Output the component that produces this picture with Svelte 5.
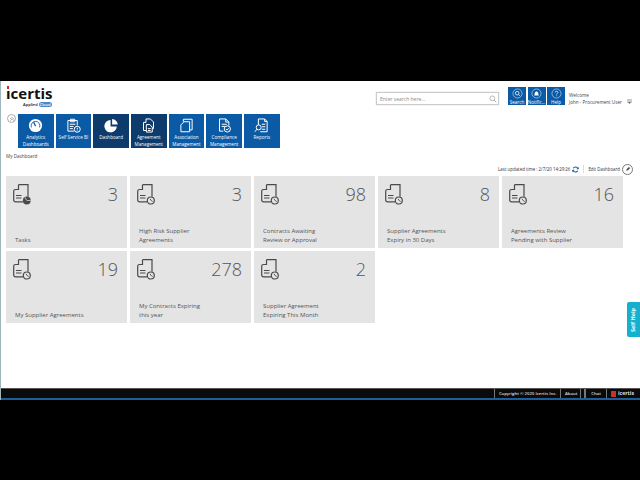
<script>
  const navItems = [
    { icon: "gauge", label: ["Analytics", "Dashboards"] },
    { icon: "clipboard", label: ["Self Service BI"] },
    { icon: "pie", label: ["Dashboard"], active: true },
    { icon: "docs", label: ["Agreement", "Management"], active: true },
    { icon: "copy", label: ["Association", "Management"] },
    { icon: "check", label: ["Compliance", "Management"] },
    { icon: "report", label: ["Reports"] }
  ];

  const tiles = [
    { count: 3, label: ["Tasks"], badge: "pie" },
    { count: 3, label: ["High Risk Supplier", "Agreements"] },
    { count: 98, label: ["Contracts Awaiting", "Review or Approval"] },
    { count: 8, label: ["Supplier Agreements", "Expiry in 30 Days"] },
    { count: 16, label: ["Agreements Review", "Pending with Supplier"] },
    { count: 19, label: ["My Supplier Agreements"] },
    { count: 278, label: ["My Contracts Expiring", "this year"] },
    { count: 2, label: ["Supplier Agreement", "Expiring This Month"] }
  ];

  const quick = [
    { label: "Search", icon: "search" },
    { label: "Notific...", icon: "bell" },
    { label: "Help", icon: "help" }
  ];
</script>

<div class="screen">
  <div class="letterbox"></div>
  <div class="app">
    <div class="main">
      <header>
        <div class="logo">
          <div class="wordmark"><span class="first">ı<i class="dot"></i></span>certis</div>
          <div class="applied">Applied <span class="pill">Cloud</span></div>
        </div>
        <div class="search">
          <span>Enter search here...</span>
          <svg viewBox="0 0 12 12" width="8" height="8"><circle cx="5" cy="5" r="3.6" fill="none" stroke="#999" stroke-width="1" /><path d="M7.6 7.6 11 11" stroke="#999" stroke-width="1.2" /></svg>
        </div>
        <div class="quick">
          {#each quick as q}
            <div class="quick-btn">
              <svg viewBox="0 0 14 14" width="11" height="11">
                <circle cx="7" cy="7" r="5.8" fill="none" stroke="#cfe0f0" stroke-width="0.8" />
                {#if q.icon === "search"}
                  <circle cx="6.6" cy="6.6" r="2.3" fill="none" stroke="#fff" stroke-width="1" /><path d="M8.3 8.3 10 10" stroke="#fff" />
                {:else if q.icon === "bell"}
                  <path d="M4 9.5c.8-1 .6-2.4.9-3.4C5.2 5 6 4.3 7 4.3s1.8.7 2.1 1.8c.3 1 .1 2.4.9 3.4z" fill="#fff" />
                {:else}
                  <path d="M5.3 5.6C5.4 4.6 6.1 4 7 4c1 0 1.8.6 1.8 1.5 0 1.3-1.7 1.3-1.7 2.7M7.1 9.4v1" fill="none" stroke="#fff" stroke-width="0.9" />
                {/if}
              </svg>
              <span>{q.label}</span>
            </div>
          {/each}
        </div>
        <div class="user">
          <div class="welcome">Welcome</div>
          <div class="name">John - Procurement User</div>
        </div>
        <div class="caret"><svg viewBox="0 0 5 4" width="5" height="4"><path d="M1.2 1.2h2.6L2.5 3z" fill="#555" /></svg></div>
      </header>

      <nav>
        <div class="collapse">
          <svg viewBox="0 0 8 8" width="6" height="6"><path d="M1.5 4 4 1.7 6.5 4M1.5 6.3 4 4l2.5 2.3" fill="none" stroke="#888" stroke-width="0.8" /></svg>
        </div>
        {#each navItems as item}
          <div class="nav-item" class:active={item.active}>
            <svg viewBox="0 0 24 24" width="15" height="15" fill="none" stroke="#fff" stroke-width="1.6">
              {#if item.icon === "gauge"}
                <circle cx="12" cy="12" r="10.5" fill="#fff" stroke="none" />
                <path d="M5.5 15a7 7 0 1 1 13 0" stroke="#0b5aa5" stroke-width="1.4" />
                <path d="M12 13 9 6.5" stroke="#0b5aa5" stroke-width="2" />
              {:else if item.icon === "clipboard"}
                <path d="M13 21H3V4h15v8" />
                <path d="M7 2h7v4H7zM6 10h9M6 13.5h6M6 17h5" />
                <circle cx="18" cy="18" r="4.8" />
                <path d="M18 15.5v3M18 20v1.2" />
              {:else if item.icon === "pie"}
                <path d="M10.5 3a10 10 0 1 0 10 10.5H10.5z" fill="#fff" stroke="none" />
                <path d="M13 1.5a9.5 9.5 0 0 1 9 9h-9z" fill="#fff" stroke="none" />
              {:else if item.icon === "docs"}
                <path d="M8 7V1.5h7l5 5V17h-2" />
                <path d="M8 7H4v13h4" />
                <path d="M8.5 10.5H14l4 4v8H8.5z" />
                <path d="M11 17h4.5M11 20h4.5" />
              {:else if item.icon === "copy"}
                <path d="M7 6V2h14v17h-4" />
                <path d="M8 6h9v16H3V11z" />
              {:else if item.icon === "check"}
                <path d="M10 21H4V1.500h10l5 5V12" />
                <path d="M14 1.5v5h5M7.5 10h8M7.5 13.5h5" />
                <circle cx="16.5" cy="17.5" r="5" />
                <path d="m14.2 17.5 1.8 1.8 2.8-2.8" />
              {:else}
                <path d="M7 11V1.5h10l4 4V22H10" />
                <path d="M17 1.5v4h4" />
                <circle cx="7.5" cy="15" r="4" />
                <path d="m4.5 18-3 4M12.5 10H18M13 14h5M12.5 18H18" />
              {/if}
            </svg>
            <div class="nav-label">
              {#each item.label as line}<div>{line}</div>{/each}
            </div>
          </div>
        {/each}
      </nav>

      <div class="crumb">My Dashboard</div>
      <div class="updated">
        <span>Last updated time : 2/7/20 14:29:26</span>
        <svg viewBox="0 0 12 12" width="7" height="7"><path d="M10 4.5A4.2 4.2 0 0 0 2.2 4M2 7.5A4.2 4.2 0 0 0 9.8 8" fill="none" stroke="#0b5aa5" stroke-width="1.8" /><path d="M11.5 1.5v4h-4zM.5 10.5v-4h4z" fill="#0b5aa5" /></svg>
        <i class="sep"></i>
        <span>Edit Dashboard</span>
        <div class="edit">
          <svg viewBox="0 0 10 10" width="6" height="6"><path d="M2 8l1-3 3.5-3.500 2 2L5 7z" fill="#444" /></svg>
        </div>
      </div>

      <div class="tiles">
        {#each tiles as t}
          <div class="tile">
            <div class="tile-top">
              <svg viewBox="0 0 18 21" width="18" height="21" fill="none" stroke="#4a4a4a" stroke-width="1.2">
                <path d="M5.5.7H15v12M5.5.7v4.8h-3A1.8 1.8 0 0 0 .7 7.3V16a1.8 1.8 0 0 0 1.8 1.8H10" />
                <path d="M3 11.5h5.5M3 14h5.5" stroke-width="1" />
                {#if t.badge === "pie"}
                  <circle cx="13.8" cy="16.5" r="3.9" fill="#4a4a4a" stroke="none" />
                  <path d="M13.8 16.5h3.9M13.8 16.5l-2-3.3" stroke="#e4e4e4" stroke-width="0.7" />
                {:else}
                  <circle cx="13.8" cy="16.5" r="3.5" fill="#e4e4e4" />
                  <path d="M13 14.8l1.4 2 1.3.6" stroke-width="0.9" />
                {/if}
              </svg>
              <div class="count">{t.count}</div>
            </div>
            <div class="tile-label">
              {#each t.label as line}<div>{line}</div>{/each}
            </div>
          </div>
        {/each}
      </div>
    </div>

    <div class="self-help"><span>Self Help</span></div>

    <footer>
      <div class="foot-item">Copyright © 2020 Icertis Inc.</div>
      <div class="foot-item about">About</div>
      <div class="foot-item chat">Chat</div>
      <div class="foot-item brand"><i class="mark"></i>icertis</div>
    </footer>
    <div class="foot-line"></div>
  </div>
</div>

<style>
  :global(body) {
    margin: 0;
    background: #000;
  }
  .screen {
    width: 640px;
    height: 480px;
    background: #000;
    font-family: "Open Sans", "Liberation Sans", sans-serif;
    overflow: hidden;
  }
  .letterbox {
    height: 81px;
  }
  .app {
    position: relative;
    height: 319px;
    background: #fff;
    display: flex;
    flex-direction: column;
    border-left: 1px solid #9fb6bd;
    box-sizing: border-box;
  }
  .main {
    flex: 1;
    padding: 0 5px;
  }
  header {
    display: flex;
    align-items: flex-start;
    height: 31px;
    padding-top: 5px;
    box-sizing: border-box;
  }
  .logo {
    width: 370px;
    color: #111;
  }
  .wordmark {
    font: bold 15px/15px "Open Sans", sans-serif;
  }
  .first {
    position: relative;
  }
  .dot {
    position: absolute;
    left: 1px;
    top: 2.5px;
    width: 2px;
    height: 3px;
    background: #c8322a;
  }
  .applied {
    font-size: 4px;
    line-height: 6px;
    margin-top: 1px;
    padding-left: 17px;
    font-weight: 600;
  }
  .pill {
    background: #4a86c8;
    color: #fff;
    border-radius: 3px;
    padding: 0 1px;
  }
  .search {
    width: 123px;
    height: 13px;
    margin-top: 6px;
    border: 1px solid #ccc;
    box-sizing: border-box;
    box-shadow: 0 0 1px #bbb;
    display: flex;
    align-items: center;
    justify-content: space-between;
    padding: 0 1px 0 3px;
    font-size: 5px;
    color: #888;
  }
  .quick {
    display: flex;
    gap: 1.5px;
    margin: 1px 0 0 9px;
  }
  .quick-btn {
    width: 18px;
    height: 18px;
    background: #0b5aa5;
    color: #fff;
    font-size: 4.6px;
    line-height: 6px;
    display: flex;
    flex-direction: column;
    align-items: center;
    padding-top: 1px;
    box-sizing: border-box;
    white-space: nowrap;
    overflow: hidden;
  }
  .user {
    margin: 5.5px 0 0 4px;
    width: 54px;
    font-size: 4.6px;
    color: #444;
    line-height: 7px;
    white-space: nowrap;
  }
  .caret {
    width: 5px;
    height: 4px;
    background: #ccc;
    margin: 13px 0 0 4px;
    line-height: 0;
  }
  nav {
    display: flex;
    gap: 2.2px;
    margin-top: 2px;
    align-items: flex-start;
    position: relative;
    padding-left: 12px;
  }
  .collapse {
    position: absolute;
    left: 1px;
    top: 0;
    width: 7px;
    height: 7px;
    border: 1px solid #aaa;
    border-radius: 50%;
    display: flex;
    align-items: center;
    justify-content: center;
  }
  .nav-item {
    width: 35.5px;
    height: 34px;
    background: #0b5aa5;
    color: #fff;
    font-size: 4.6px;
    line-height: 7px;
    text-align: center;
    display: flex;
    flex-direction: column;
    align-items: center;
    padding-top: 4px;
    box-sizing: border-box;
  }
  .nav-item.active {
    background: #0c3b6c;
  }
  .nav-label {
    white-space: nowrap;
    margin-top: 0.5px;
  }
  .crumb {
    font-size: 4.6px;
    line-height: 7px;
    color: #444;
    margin-top: 5px;
  }
  .updated {
    display: flex;
    justify-content: flex-end;
    align-items: center;
    gap: 2px;
    font-size: 4.4px;
    color: #333;
    height: 11px;
    margin: 3.5px 0 0 0;
  }
  .sep {
    width: 1px;
    height: 8px;
    background: #ddd;
    margin: 0 2px;
  }
  .edit {
    width: 9px;
    height: 9px;
    margin-right: 2px;
    border: 1px solid #777;
    border-radius: 50%;
    display: flex;
    align-items: center;
    justify-content: center;
  }
  .tiles {
    display: grid;
    grid-template-columns: repeat(5, 121px);
    grid-auto-rows: 72px;
    gap: 3px;
    margin-top: 1.5px;
  }
  .tile {
    background: #e4e4e4;
    display: flex;
    flex-direction: column;
    justify-content: space-between;
    padding: 8px 9px 3.5px 7px;
    box-sizing: border-box;
  }
  .tile-top {
    display: flex;
    justify-content: space-between;
    align-items: flex-start;
  }
  .count {
    font-size: 18px;
    line-height: 20px;
    color: #555;
    font-weight: 300;
  }
  .tile-label {
    font-size: 6px;
    line-height: 9px;
    color: #555;
    padding-left: 2px;
  }
  .self-help {
    position: absolute;
    right: 0;
    top: 221px;
    width: 13px;
    height: 35px;
    background: #14b1cf;
    border-radius: 2px 0 0 2px;
    color: #fff;
    font-size: 5.5px;
    font-weight: 700;
    display: flex;
    align-items: center;
    justify-content: center;
  }
  .self-help span {
    transform: rotate(-90deg);
    white-space: nowrap;
  }
  footer {
    height: 10px;
    background: #0a0a0a;
    border-top: 1px solid #555;
    box-sizing: border-box;
    display: flex;
    justify-content: flex-end;
    color: #ddd;
    font-size: 4.25px;
    line-height: 9px;
    font-weight: 600;
  }
  .foot-item {
    border-left: 1px solid #777;
    padding: 0 4px;
  }
  .foot-item.about {
    padding: 0 3px 0 3.5px;
    margin-right: 3px;
    border-right: 1px solid #777;
  }
  .foot-item.chat {
    padding: 0 5px;
    border-left: 2px solid #777;
  }
  .foot-item.brand {
    display: flex;
    align-items: center;
    gap: 2px;
    padding-right: 6px;
    font-size: 5.2px;
    font-weight: 700;
  }
  .mark {
    width: 5px;
    height: 6px;
    background: #c8322a;
  }
  .foot-line {
    height: 2px;
    background: #1d5f9a;
  }
</style>
